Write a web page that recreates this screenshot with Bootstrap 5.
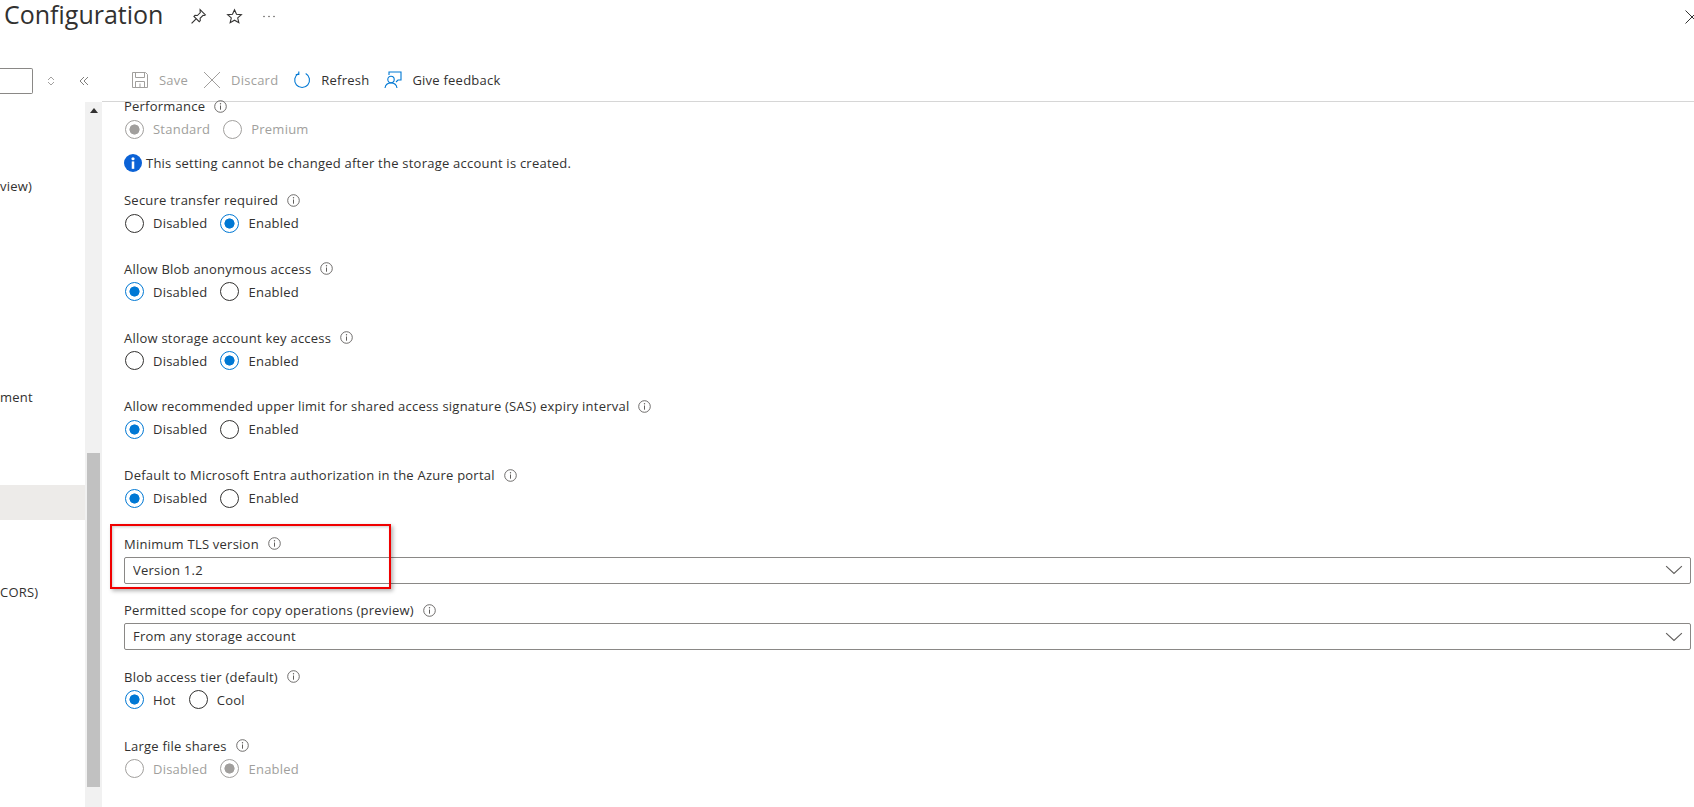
<!DOCTYPE html>
<html lang="en">
<head>
<meta charset="UTF-8">
<title>Configuration</title>
<link href="https://cdn.jsdelivr.net/npm/bootstrap@5.3.0/dist/css/bootstrap.min.css" rel="stylesheet">
<style>
    html, body { height: 100%; overflow: hidden; background: #fff; }
    body { font-family: "Open Sans", "Liberation Sans", sans-serif; font-size: 13px; letter-spacing: .23px; color: #323130; }
    .cfg-head { height: 60px; padding: 0 0 0 4px; position: relative; }
    .cfg-title { font-size: 25px; line-height: 29px; margin: 0; font-weight: 400; letter-spacing: 0; width: 173px; color: #323130; }
    .cfg-head-icons { gap: 19px; margin-left: 13px; height: 32px; }
    .cfg-close { position: absolute; right: -6px; top: 9px; }
    .cfg-body { height: 747px; }
    .cfg-side { width: 102px; flex: none; }
    .cfg-search-row { height: 42px; }
    .cfg-search { width: 33px; height: 26px; margin-top: 8px; border: 1px solid #8a8886; border-left: 0; border-radius: 0 2px 2px 0; }
    .cfg-sort { margin: 8px 0 0 14px; }
    .cfg-collapse { margin: 8px 0 0 24px; }
    .cfg-side-wrap { height: 705px; }
    .cfg-nav { width: 85px; padding-top: 67px; overflow: hidden; }
    .cfg-nav-item { height: 35px; line-height: 35px; white-space: nowrap; overflow: hidden; }
    .cfg-nav-ment { margin-top: 176px; }
    .cfg-nav-active { margin-top: 70px; background: #edebe9; }
    .cfg-nav-cors { margin-top: 55px; }
    .cfg-track { width: 17px; background: #f1f1f1; }
    .cfg-arrow { height: 18px; padding-top: 6px; }
    .cfg-thumb { width: 13px; height: 334px; margin: 333px auto 0; background: #c1c1c1; }
    .cfg-main { min-width: 0; }
    .cfg-toolbar { height: 42px; border-bottom: 1px solid #d6d6d6; padding: 0 0 1px 29px; }
    .cfg-tool { gap: 10px; margin-right: 15px; line-height: 18px; }
    .cfg-tool.is-off { color: #a19f9d; }
    .cfg-scroll { height: 705px; padding: 0 3px 0 22px; }
    .cfg-inner { margin-top: -6px; }
    .cfg-label { height: 20px; line-height: 20px; gap: 9px; }
    .cfg-radios { height: 24px; margin-top: 1px; gap: 12px; }
    .cfg-field { margin-bottom: 23.8px; }
    .cfg-radio-item { gap: 9px; line-height: 24px; margin: 0; }
    .cfg-radio { appearance: none; -webkit-appearance: none; width: 19px; height: 19px; margin: 0 0 0 1px; border: 1px solid #323130; border-radius: 50%; background: #fff; flex: none; }
    .cfg-radio:checked { border-color: #0078d4; background: radial-gradient(circle, #0078d4 0 4.8px, #fff 5.3px); }
    .cfg-radio:disabled { border-color: #a19f9d; }
    .cfg-radio:disabled:checked { background: radial-gradient(circle, #a19f9d 0 4.8px, #fff 5.3px); }
    .is-off-text { color: #a19f9d; }
    .cfg-note { height: 20px; line-height: 20px; gap: 4px; margin: 12px 0 17px; }
    .cfg-select { height: 27px; margin-top: 3px; padding: 0 8px; font-size: 13px; line-height: 25px; letter-spacing: .23px; color: #323130; border: 1px solid #8a8886; border-radius: 2px;
        background-position: right 7px center; background-size: 18px 18px;
        background-image: url("data:image/svg+xml,%3csvg xmlns='http://www.w3.org/2000/svg' viewBox='0 0 16 16'%3e%3cpath fill='none' stroke='%23605e5c' d='M1 4.5l7 6.5 7-6.5'/%3e%3c/svg%3e"); }
    .cfg-tls { position: relative; margin-bottom: 16.5px; }
    .cfg-mark { position: absolute; left: -14px; top: -10px; width: 281px; height: 65px; border: 2px solid #f00000; box-shadow: 2px 2px 4px rgba(0,0,0,.3), inset 1px 1px 3px rgba(0,0,0,.2); pointer-events: none; }
</style>
</head>
<body>
<div class="cfg-head d-flex">
    <h1 class="cfg-title">Configuration</h1>
    <div class="cfg-head-icons d-flex align-items-center">
        <svg width="17" height="17" viewBox="0 0 16 16" fill="none" stroke="#323130"><path d="M9.500 1.500l5 5-1 .6-1.200-.2-2.800 2.800.2 2.200-1 1-5-5 1-1 2.200.2L9.700 4.300 9.500 3z"/><path d="M5.500 10.500L1.500 14.500"/></svg>
        <svg width="17" height="17" viewBox="0 0 16 16" fill="none" stroke="#323130"><path d="M8 1.600l1.900 4.300 4.600.4-3.500 3 1.100 4.600L8 11.500l-4.100 2.400L5 9.300l-3.500-3 4.600-.4z"/></svg>
        <svg width="14" height="16" viewBox="0 0 14 16" fill="#605e5c"><circle cx="2" cy="8.500" r=".8"/><circle cx="7" cy="8.500" r=".8"/><circle cx="12" cy="8.500" r=".8"/></svg>
    </div>
    <svg class="cfg-close" width="16" height="16" viewBox="0 0 16 16" stroke="#323130" fill="none"><path d="M1.500 1.500l13 13M14.500 1.500l-13 13"/></svg>
</div>
<div class="cfg-body d-flex">
    <div class="cfg-side">
        <div class="cfg-search-row d-flex align-items-start">
            <div class="cfg-search"></div>
            <svg class="cfg-sort" width="8" height="26" viewBox="0 0 8 26" fill="none" stroke="#8a8886" stroke-width=".8"><path d="M1 12l3-3 3 3M1 14l3 3 3-3"/></svg>
            <svg class="cfg-collapse" width="10" height="26" viewBox="0 0 10 26" fill="none" stroke="#605e5c" stroke-width=".8"><path d="M5 9l-4 4 4 4M9 9l-4 4 4 4"/></svg>
        </div>
        <div class="cfg-side-wrap d-flex">
            <div class="cfg-nav">
                <div class="cfg-nav-item">view)</div>
                <div class="cfg-nav-item cfg-nav-ment">ment</div>
                <div class="cfg-nav-item cfg-nav-active"></div>
                <div class="cfg-nav-item cfg-nav-cors">CORS)</div>
            </div>
            <div class="cfg-track">
                <div class="cfg-arrow d-flex justify-content-center">
                    <svg width="8" height="5" viewBox="0 0 8 5" fill="#323130"><path d="M4 0l4 5H0z"/></svg>
                </div>
                <div class="cfg-thumb"></div>
            </div>
        </div>
    </div>
    <div class="cfg-main flex-grow-1">
        <div class="cfg-toolbar d-flex align-items-center">
            <div class="cfg-tool is-off d-flex align-items-center">
                <svg width="18" height="18" viewBox="0 0 18 18" fill="none" stroke="#a19f9d"><path d="M1.500 1.500h13l2 2v13h-15z"/><path d="M4.500 1.500v5h9v-5M4.500 16.500v-6h9v6M9 12.500v4"/></svg>
                <span>Save</span>
            </div>
            <div class="cfg-tool is-off d-flex align-items-center">
                <svg width="18" height="18" viewBox="0 0 18 18" fill="none" stroke="#a19f9d"><path d="M1 1l16 16M17 1L1 17"/></svg>
                <span>Discard</span>
            </div>
            <div class="cfg-tool d-flex align-items-center">
                <svg width="18" height="18" viewBox="0 0 18 18" fill="none" stroke="#0078d4" stroke-width="1.100"><path d="M5.500 2.600a7.400 7.400 0 1 0 7.200 0"/><path d="M5.800.5v3H2.800"/></svg>
                <span>Refresh</span>
            </div>
            <div class="cfg-tool d-flex align-items-center">
                <svg width="18" height="18" viewBox="0 0 18 18" fill="none" stroke="#0078d4" stroke-width="1.100"><circle cx="7" cy="8.500" r="3.200"/><path d="M1 17c.5-3.500 2.800-5 6-5s5.500 1.500 6 5"/><path d="M5 4V1h12v8h-3l-2 2"/></svg>
                <span>Give feedback</span>
            </div>
        </div>
        <div class="cfg-scroll">
            <div class="cfg-inner">
                <div class="cfg-label d-flex align-items-center">Performance <svg width="13" height="13"><use href="#ico-info"/></svg></div>
                <div class="cfg-radios d-flex">
                    <label class="cfg-radio-item d-flex align-items-center is-off-text"><input class="cfg-radio" type="radio" name="perf" checked disabled>Standard</label>
                    <label class="cfg-radio-item d-flex align-items-center is-off-text"><input class="cfg-radio" type="radio" name="perf" disabled>Premium</label>
                </div>
                <div class="cfg-note d-flex align-items-center">
                    <svg width="18" height="18" viewBox="0 0 17 17"><circle cx="8.500" cy="8.500" r="8.500" fill="#0b62d6"/><rect x="7.300" y="7" width="2.400" height="7" fill="#fff"/><circle cx="8.500" cy="4.500" r="1.500" fill="#fff"/></svg>
                    <span>This setting cannot be changed after the storage account is created.</span>
                </div>

                <div class="cfg-field">
                    <div class="cfg-label d-flex align-items-center">Secure transfer required <svg width="13" height="13"><use href="#ico-info"/></svg></div>
                    <div class="cfg-radios d-flex">
                        <label class="cfg-radio-item d-flex align-items-center"><input class="cfg-radio" type="radio" name="secure">Disabled</label>
                        <label class="cfg-radio-item d-flex align-items-center"><input class="cfg-radio" type="radio" name="secure" checked>Enabled</label>
                    </div>
                </div>
                <div class="cfg-field">
                    <div class="cfg-label d-flex align-items-center">Allow Blob anonymous access <svg width="13" height="13"><use href="#ico-info"/></svg></div>
                    <div class="cfg-radios d-flex">
                        <label class="cfg-radio-item d-flex align-items-center"><input class="cfg-radio" type="radio" name="anon" checked>Disabled</label>
                        <label class="cfg-radio-item d-flex align-items-center"><input class="cfg-radio" type="radio" name="anon">Enabled</label>
                    </div>
                </div>
                <div class="cfg-field">
                    <div class="cfg-label d-flex align-items-center">Allow storage account key access <svg width="13" height="13"><use href="#ico-info"/></svg></div>
                    <div class="cfg-radios d-flex">
                        <label class="cfg-radio-item d-flex align-items-center"><input class="cfg-radio" type="radio" name="key">Disabled</label>
                        <label class="cfg-radio-item d-flex align-items-center"><input class="cfg-radio" type="radio" name="key" checked>Enabled</label>
                    </div>
                </div>
                <div class="cfg-field">
                    <div class="cfg-label d-flex align-items-center">Allow recommended upper limit for shared access signature (SAS) expiry interval <svg width="13" height="13"><use href="#ico-info"/></svg></div>
                    <div class="cfg-radios d-flex">
                        <label class="cfg-radio-item d-flex align-items-center"><input class="cfg-radio" type="radio" name="sas" checked>Disabled</label>
                        <label class="cfg-radio-item d-flex align-items-center"><input class="cfg-radio" type="radio" name="sas">Enabled</label>
                    </div>
                </div>
                <div class="cfg-field">
                    <div class="cfg-label d-flex align-items-center">Default to Microsoft Entra authorization in the Azure portal <svg width="13" height="13"><use href="#ico-info"/></svg></div>
                    <div class="cfg-radios d-flex">
                        <label class="cfg-radio-item d-flex align-items-center"><input class="cfg-radio" type="radio" name="entra" checked>Disabled</label>
                        <label class="cfg-radio-item d-flex align-items-center"><input class="cfg-radio" type="radio" name="entra">Enabled</label>
                    </div>
                </div>

                <div class="cfg-tls">
                    <div class="cfg-label d-flex align-items-center">Minimum TLS version <svg width="13" height="13"><use href="#ico-info"/></svg></div>
                    <select class="form-select cfg-select"><option>Version 1.2</option></select>
                    <div class="cfg-mark"></div>
                </div>
                <div class="cfg-tls">
                    <div class="cfg-label d-flex align-items-center">Permitted scope for copy operations (preview) <svg width="13" height="13"><use href="#ico-info"/></svg></div>
                    <select class="form-select cfg-select"><option>From any storage account</option></select>
                </div>

                <div class="cfg-field">
                    <div class="cfg-label d-flex align-items-center">Blob access tier (default) <svg width="13" height="13"><use href="#ico-info"/></svg></div>
                    <div class="cfg-radios d-flex">
                        <label class="cfg-radio-item d-flex align-items-center"><input class="cfg-radio" type="radio" name="tier" checked>Hot</label>
                        <label class="cfg-radio-item d-flex align-items-center"><input class="cfg-radio" type="radio" name="tier">Cool</label>
                    </div>
                </div>
                <div class="cfg-field">
                    <div class="cfg-label d-flex align-items-center">Large file shares <svg width="13" height="13"><use href="#ico-info"/></svg></div>
                    <div class="cfg-radios d-flex">
                        <label class="cfg-radio-item d-flex align-items-center is-off-text"><input class="cfg-radio" type="radio" name="large" disabled>Disabled</label>
                        <label class="cfg-radio-item d-flex align-items-center is-off-text"><input class="cfg-radio" type="radio" name="large" checked disabled>Enabled</label>
                    </div>
                </div>
            </div>
        </div>
    </div>
</div>
<svg width="0" height="0" class="d-block" aria-hidden="true">
    <symbol id="ico-info" viewBox="0 0 13 13"><circle cx="6.500" cy="6.500" r="5.800" fill="none" stroke="#605e5c" stroke-width=".9"/><path d="M6.500 5.500v4.200" stroke="#605e5c" fill="none"/><circle cx="6.500" cy="3.700" r=".7" fill="#605e5c"/></symbol>
</svg>
<script src="https://cdn.jsdelivr.net/npm/bootstrap@5.3.0/dist/js/bootstrap.bundle.min.js"></script>
</body>
</html>
